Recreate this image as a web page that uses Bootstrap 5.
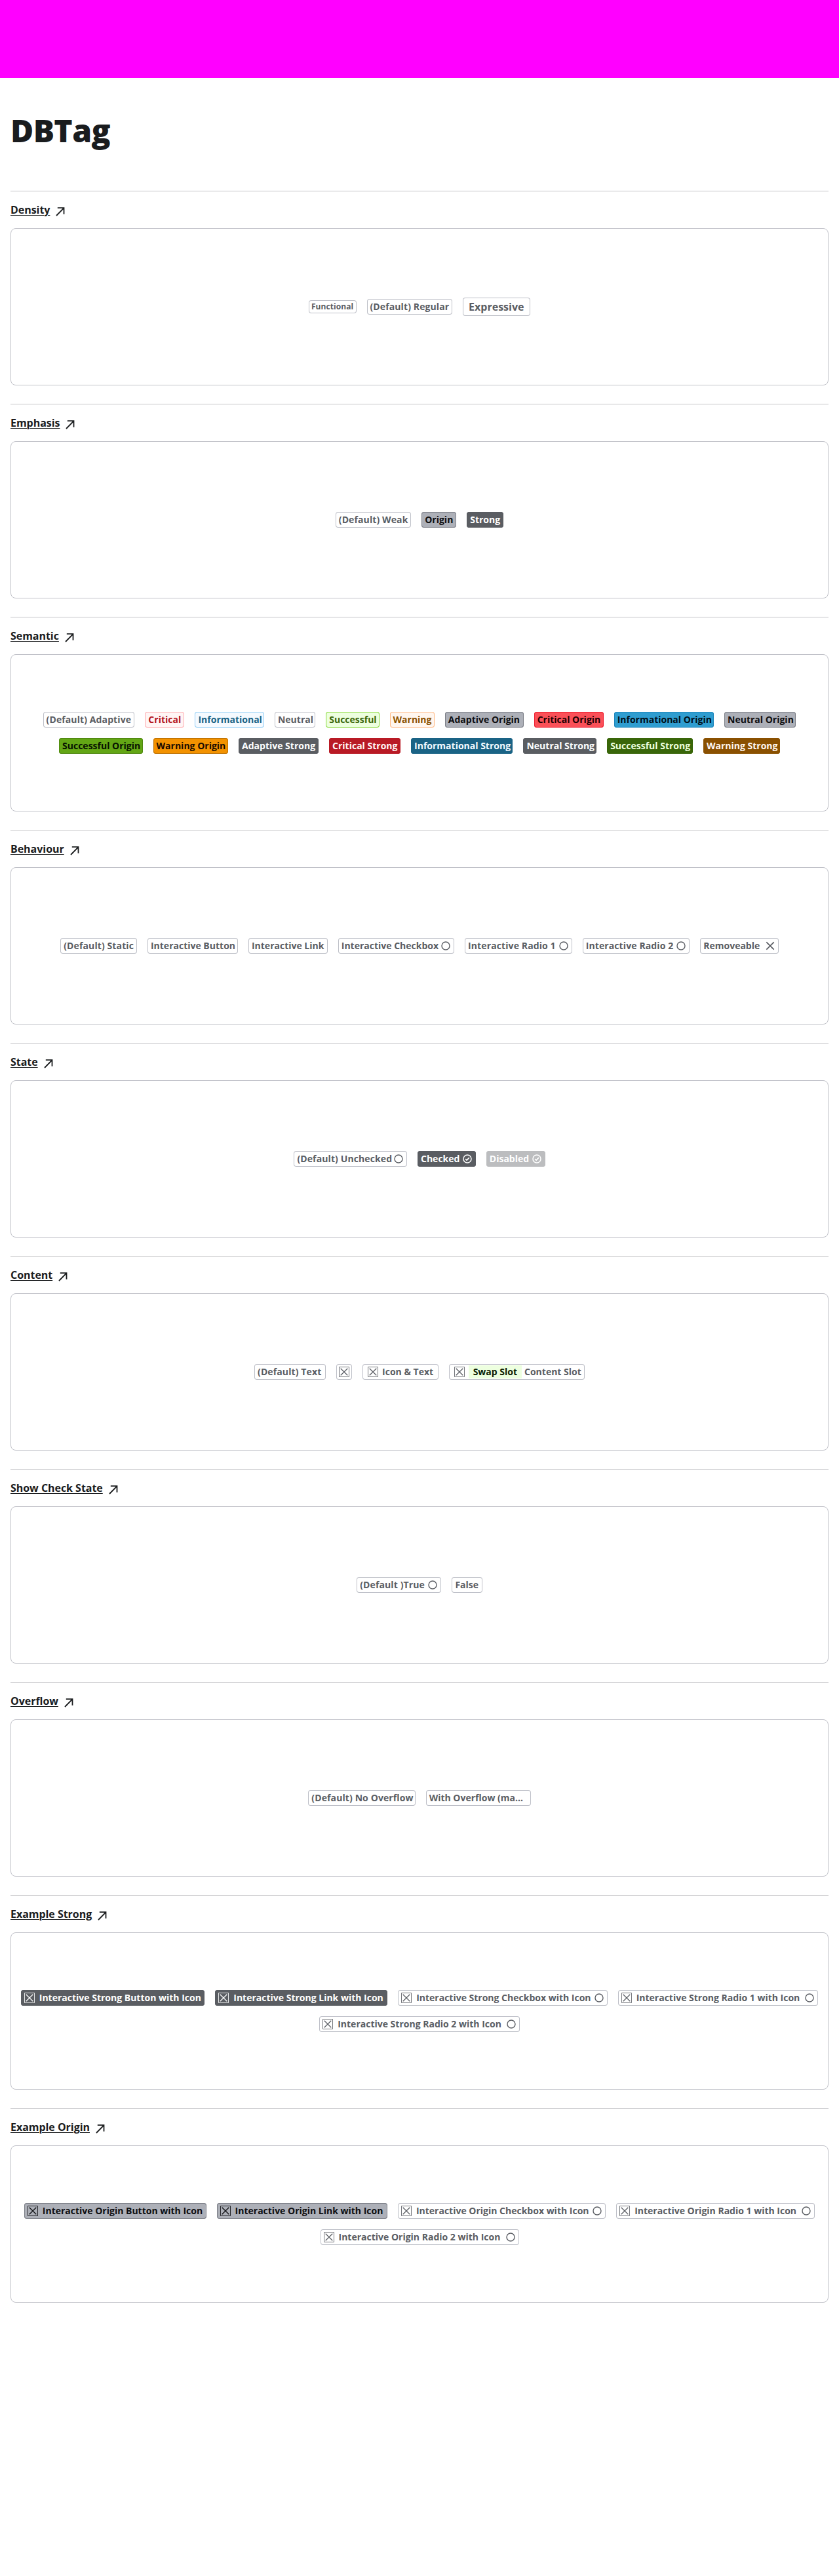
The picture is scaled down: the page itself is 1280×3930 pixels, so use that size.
<!DOCTYPE html>
<html lang="en">
<head>
<meta charset="utf-8">
<meta name="viewport" content="width=device-width, initial-scale=1">
<title>DBTag</title>
<link href="https://cdn.jsdelivr.net/npm/bootstrap@5.3.0/dist/css/bootstrap.min.css" rel="stylesheet">
<script src="https://cdn.jsdelivr.net/npm/bootstrap@5.3.0/dist/js/bootstrap.bundle.min.js"></script>
<style>
body{font-family:"Open Sans","Noto Sans",sans-serif;color:#1a1c1e;background:#fff}
.topband{height:119px;background:#f0f}
.page-title{font-size:48px;font-weight:800;line-height:60px;letter-spacing:-.6px;padding-top:50px;height:172px}
.demo{height:325px}
.demo-head{border-top:1px solid #c3c3c6;height:57px;padding-top:16px}
.demo-head a{font-size:16px;font-weight:700;line-height:24px;color:#1a1c1e;letter-spacing:-.04px;text-underline-offset:2px;text-decoration-thickness:1px}
.demo-head svg{width:14px;height:14px;margin:8px 0 0 9px;fill:none;stroke:#1a1c1e;stroke-width:1.8}
.demo-box{height:240px;border:1px solid #c0c1c8;border-radius:8px;gap:16px}
/* tag */
.tg{--fg:#5a5d63;--bg:#fff;--bd:#bdbfc7;height:24px;padding:0 5px;width:var(--w);box-shadow:inset 0 0 0 1px var(--bd);border-radius:4px;color:var(--fg);background:var(--bg);font-size:14px;font-weight:700;line-height:20px;white-space:nowrap;text-decoration:none;flex:none}
.tg svg{width:16px;height:16px;flex:none;fill:none;stroke:currentColor}
.tg .lead-ic{margin-right:7px}
.ps-2 .lead-ic{margin-right:6px!important}
.tg .tail-ic{margin-left:auto}
.tg-sm{height:20px;padding:0 4px;font-size:12px;letter-spacing:.08px}
.tg-lg{height:28px;padding:0 9px;font-size:16px}
.loose{letter-spacing:.11px}
.critical{--fg:#b4151f;--bg:#fff5f5;--bd:#ffabaf}
.informational{--fg:#1a6385;--bg:#f5faff;--bd:#8fcdf5}
.successful{--fg:#396609;--bg:#edffdf;--bd:#87d93a}
.warning-weak{--fg:#8a5000;--bg:#fff6ef;--bd:#ffb985}
.origin{--fg:#0d0e11;--bg:#adb0b8;--bd:#7b7e86}
.origin.critical{--fg:#1f0002;--bg:#fb5058;--bd:#ed1c2e}
.origin.informational{--fg:#000f18;--bg:#2f9dd0;--bd:#1e86bb}
.origin.successful{--fg:#071200;--bg:#63a615;--bd:#4e870f}
.origin.warning-weak{--fg:#1a0c00;--bg:#f39200;--bd:#bd7000}
.strong{--fg:#fff;--bg:#5a5d62;--bd:#5a5d62}
.strong.critical{--fg:#fff5f5;--bg:#b91a25;--bd:#b91a25}
.strong.informational{--fg:#f5faff;--bg:#1a6385;--bd:#1a6385}
.strong.successful{--fg:#edffdf;--bg:#396609;--bd:#396609}
.strong.warning-weak{--fg:#fff6ef;--bg:#8a5000;--bd:#8a5000}
.off{opacity:.4}
.swap{height:20px;background:#edffdf;color:#0c1c00;padding:0 7px;margin-right:4px}
</style>
</head>
<body>
<svg class="d-none">
<symbol id="arrow" viewBox="0 0 14 14"><path d="M1 13 12.4 1.3M2.8 1.2h9.7v9.6"/></symbol>
<symbol id="ring" viewBox="0 0 16 16"><circle cx="8" cy="8" r="6" stroke-width="1.4"/></symbol>
<symbol id="check" viewBox="0 0 16 16"><circle cx="8" cy="8" r="6" stroke-width="1.5"/><path d="m5.2 8.2 1.9 1.9 3.8-4" stroke-width="1.7"/></symbol>
<symbol id="cross" viewBox="0 0 16 16"><path d="m2.3 2.3 11.4 11.4m0-11.4L2.3 13.7" stroke-width="1.7"/></symbol>
<symbol id="box" viewBox="0 0 16 16"><path d="M.5.5h15v15H.5z" stroke-width="1" stroke-opacity=".85"/><path d="m2.7 2.7 10.6 10.6m0-10.6L2.7 13.3" stroke-width="1.3"/></symbol>
</svg>
<div class="topband"></div>
<main class="px-3">
<h1 class="page-title m-0">DBTag</h1>

<section class="demo">
<div class="demo-head d-flex align-items-start"><a href="#">Density</a><svg><use href="#arrow"/></svg></div>
<div class="demo-box d-flex flex-wrap justify-content-center align-items-center align-content-center">
<span class="tg tg-sm d-flex align-items-center" style="--w:72.6px">Functional</span>
<span class="tg loose d-flex align-items-center" style="--w:130.6px">(Default) Regular</span>
<span class="tg tg-lg d-flex align-items-center" style="--w:103px">Expressive</span>
</div>
</section>

<section class="demo">
<div class="demo-head d-flex align-items-start"><a href="#">Emphasis</a><svg><use href="#arrow"/></svg></div>
<div class="demo-box d-flex flex-wrap justify-content-center align-items-center align-content-center">
<span class="tg loose d-flex align-items-center" style="--w:115.4px">(Default) Weak</span>
<span class="tg origin d-flex align-items-center" style="--w:53px">Origin</span>
<span class="tg strong d-flex align-items-center" style="--w:56px">Strong</span>
</div>
</section>

<section class="demo">
<div class="demo-head d-flex align-items-start"><a href="#">Semantic</a><svg><use href="#arrow"/></svg></div>
<div class="demo-box d-flex flex-wrap justify-content-center align-items-center align-content-center">
<span class="tg loose d-flex align-items-center" style="--w:139.8px">(Default) Adaptive</span>
<span class="tg critical d-flex align-items-center" style="--w:60.1px">Critical</span>
<span class="tg informational d-flex align-items-center" style="--w:105.5px">Informational</span>
<span class="tg d-flex align-items-center" style="--w:62.3px">Neutral</span>
<span class="tg successful d-flex align-items-center" style="--w:81.3px">Successful</span>
<span class="tg warning-weak d-flex align-items-center" style="--w:68.3px">Warning</span>
<span class="tg origin d-flex align-items-center" style="--w:119.8px">Adaptive Origin</span>
<span class="tg origin critical d-flex align-items-center" style="--w:106px">Critical Origin</span>
<span class="tg origin informational d-flex align-items-center" style="--w:152.4px">Informational Origin</span>
<span class="tg origin d-flex align-items-center" style="--w:109.4px">Neutral Origin</span>
<span class="tg origin successful d-flex align-items-center" style="--w:127.5px">Successful Origin</span>
<span class="tg origin warning-weak d-flex align-items-center" style="--w:114.5px">Warning Origin</span>
<span class="tg strong d-flex align-items-center" style="--w:122px">Adaptive Strong</span>
<span class="tg strong critical d-flex align-items-center" style="--w:109px">Critical Strong</span>
<span class="tg strong informational d-flex align-items-center" style="--w:155.4px">Informational Strong</span>
<span class="tg strong d-flex align-items-center" style="--w:111.7px">Neutral Strong</span>
<span class="tg strong successful d-flex align-items-center" style="--w:130.8px">Successful Strong</span>
<span class="tg strong warning-weak d-flex align-items-center" style="--w:117px">Warning Strong</span>
</div>
</section>

<section class="demo">
<div class="demo-head d-flex align-items-start"><a href="#">Behaviour</a><svg><use href="#arrow"/></svg></div>
<div class="demo-box d-flex flex-wrap justify-content-center align-items-center align-content-center">
<span class="tg loose d-flex align-items-center" style="--w:116.7px">(Default) Static</span>
<a href="#" class="tg d-flex align-items-center" style="--w:138px">Interactive Button</a>
<a href="#" class="tg d-flex align-items-center" style="--w:120.8px">Interactive Link</a>
<span class="tg d-flex align-items-center" style="--w:177.3px">Interactive Checkbox<svg class="tail-ic"><use href="#ring"/></svg></span>
<span class="tg loose d-flex align-items-center" style="--w:163.6px">Interactive Radio 1<svg class="tail-ic"><use href="#ring"/></svg></span>
<span class="tg loose d-flex align-items-center" style="--w:163.6px">Interactive Radio 2<svg class="tail-ic"><use href="#ring"/></svg></span>
<span class="tg d-flex align-items-center" style="--w:119.5px">Removeable<svg class="tail-ic"><use href="#cross"/></svg></span>
</div>
</section>

<section class="demo">
<div class="demo-head d-flex align-items-start"><a href="#">State</a><svg><use href="#arrow"/></svg></div>
<div class="demo-box d-flex flex-wrap justify-content-center align-items-center align-content-center">
<span class="tg loose d-flex align-items-center" style="--w:172.6px">(Default) Unchecked<svg class="tail-ic"><use href="#ring"/></svg></span>
<span class="tg strong d-flex align-items-center" style="--w:88.8px">Checked<svg class="tail-ic"><use href="#check"/></svg></span>
<span class="tg strong off d-flex align-items-center" style="--w:89.8px">Disabled<svg class="tail-ic"><use href="#check"/></svg></span>
</div>
</section>

<section class="demo">
<div class="demo-head d-flex align-items-start"><a href="#">Content</a><svg><use href="#arrow"/></svg></div>
<div class="demo-box d-flex flex-wrap justify-content-center align-items-center align-content-center">
<span class="tg loose d-flex align-items-center" style="--w:109px">(Default) Text</span>
<span class="tg d-flex align-items-center justify-content-center" style="--w:24px"><svg><use href="#box"/></svg></span>
<span class="tg d-flex align-items-center ps-2" style="--w:115.6px"><svg class="lead-ic"><use href="#box"/></svg>Icon &amp; Text</span>
<span class="tg d-flex align-items-center ps-2" style="--w:207.3px"><svg class="lead-ic"><use href="#box"/></svg><span class="swap">Swap Slot</span>Content Slot</span>
</div>
</section>

<section class="demo">
<div class="demo-head d-flex align-items-start"><a href="#">Show Check State</a><svg><use href="#arrow"/></svg></div>
<div class="demo-box d-flex flex-wrap justify-content-center align-items-center align-content-center">
<span class="tg loose d-flex align-items-center" style="--w:129.2px">(Default )True<svg class="tail-ic"><use href="#ring"/></svg></span>
<span class="tg d-flex align-items-center" style="--w:46.4px">False</span>
</div>
</section>

<section class="demo">
<div class="demo-head d-flex align-items-start"><a href="#">Overflow</a><svg><use href="#arrow"/></svg></div>
<div class="demo-box d-flex flex-wrap justify-content-center align-items-center align-content-center">
<span class="tg loose d-flex align-items-center" style="--w:163.3px">(Default) No Overflow</span>
<span class="tg d-flex align-items-center" style="--w:160px">With Overflow (ma…</span>
</div>
</section>

<section class="demo">
<div class="demo-head d-flex align-items-start"><a href="#">Example Strong</a><svg><use href="#arrow"/></svg></div>
<div class="demo-box d-flex flex-wrap justify-content-center align-items-center align-content-center">
<a href="#" class="tg strong d-flex align-items-center" style="--w:280.5px"><svg class="lead-ic"><use href="#box"/></svg>Interactive Strong Button with Icon</a>
<a href="#" class="tg strong d-flex align-items-center" style="--w:262.9px"><svg class="lead-ic"><use href="#box"/></svg>Interactive Strong Link with Icon</a>
<span class="tg d-flex align-items-center" style="--w:319.5px"><svg class="lead-ic"><use href="#box"/></svg>Interactive Strong Checkbox with Icon<svg class="tail-ic"><use href="#ring"/></svg></span>
<span class="tg d-flex align-items-center" style="--w:305.6px"><svg class="lead-ic"><use href="#box"/></svg>Interactive Strong Radio 1 with Icon<svg class="tail-ic"><use href="#ring"/></svg></span>
<span class="tg d-flex align-items-center" style="--w:305.6px"><svg class="lead-ic"><use href="#box"/></svg>Interactive Strong Radio 2 with Icon<svg class="tail-ic"><use href="#ring"/></svg></span>
</div>
</section>

<section class="demo">
<div class="demo-head d-flex align-items-start"><a href="#">Example Origin</a><svg><use href="#arrow"/></svg></div>
<div class="demo-box d-flex flex-wrap justify-content-center align-items-center align-content-center">
<a href="#" class="tg origin d-flex align-items-center" style="--w:277.8px"><svg class="lead-ic"><use href="#box"/></svg>Interactive Origin Button with Icon</a>
<a href="#" class="tg origin d-flex align-items-center" style="--w:260.3px"><svg class="lead-ic"><use href="#box"/></svg>Interactive Origin Link with Icon</a>
<span class="tg d-flex align-items-center" style="--w:317.3px"><svg class="lead-ic"><use href="#box"/></svg>Interactive Origin Checkbox with Icon<svg class="tail-ic"><use href="#ring"/></svg></span>
<span class="tg d-flex align-items-center" style="--w:303px"><svg class="lead-ic"><use href="#box"/></svg>Interactive Origin Radio 1 with Icon<svg class="tail-ic"><use href="#ring"/></svg></span>
<span class="tg d-flex align-items-center" style="--w:303px"><svg class="lead-ic"><use href="#box"/></svg>Interactive Origin Radio 2 with Icon<svg class="tail-ic"><use href="#ring"/></svg></span>
</div>
</section>
</main>
</body>
</html>
